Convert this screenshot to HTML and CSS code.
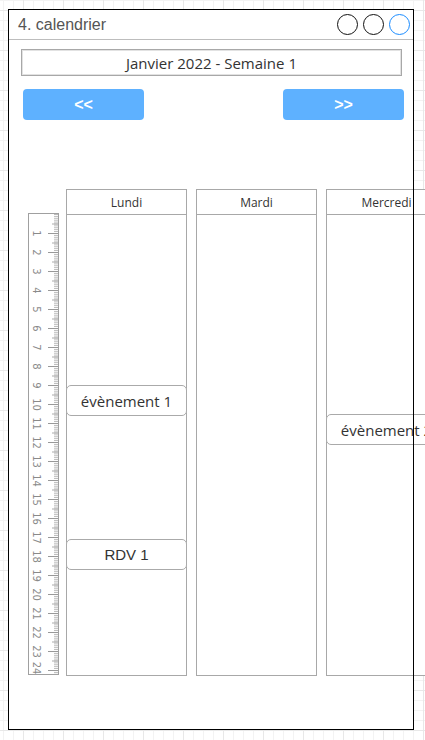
FILE: index.html
```html
<!DOCTYPE html>
<html lang="fr">
<head>
  <meta charset="UTF-8" />
  <meta name="viewport" content="width=device-width, initial-scale=1.0"/>
  <title>4. calendrier</title>
  <link rel="stylesheet" href="styles.css">
</head>
<body>

<div class="frame">
  <header class="titlebar">
    <span class="title">4. calendrier</span>
    <div class="dots">
      <span class="dot"></span>
      <span class="dot"></span>
      <span class="dot dot-blue"></span>
    </div>
  </header>

  <div class="week">Janvier 2022 - Semaine 1</div>

  <div class="nav">
    <button class="nav-btn">&lt;&lt;</button>
    <button class="nav-btn">&gt;&gt;</button>
  </div>

  <div class="calendar">
    <div class="ruler">
      <svg width="29" height="460" viewBox="0 0 29 460">
        <defs>
          <pattern id="minor" width="29" height="1.9" patternUnits="userSpaceOnUse">
            <rect x="25" y="0" width="4" height="0.9" fill="#b5b5b5"/>
          </pattern>
          <pattern id="half" width="29" height="19" patternUnits="userSpaceOnUse" y="9.5">
            <rect x="23" y="0" width="6" height="1" fill="#aaa"/>
          </pattern>
          <pattern id="major" width="29" height="19" patternUnits="userSpaceOnUse">
            <rect x="19" y="0" width="10" height="1" fill="#999"/>
          </pattern>
        </defs>
        <rect x="0" y="0" width="29" height="460" fill="url(#minor)"/>
        <rect x="0" y="0" width="29" height="460" fill="url(#half)"/>
        <rect x="0" y="1" width="29" height="460" fill="url(#major)"/>
        <g class="ruler-num">
          <text transform="translate(7 19.5) rotate(90)">1</text>
          <text transform="translate(7 38.5) rotate(90)">2</text>
          <text transform="translate(7 57.5) rotate(90)">3</text>
          <text transform="translate(7 76.5) rotate(90)">4</text>
          <text transform="translate(7 95.5) rotate(90)">5</text>
          <text transform="translate(7 114.5) rotate(90)">6</text>
          <text transform="translate(7 133.5) rotate(90)">7</text>
          <text transform="translate(7 152.5) rotate(90)">8</text>
          <text transform="translate(7 171.5) rotate(90)">9</text>
          <text transform="translate(7 190.5) rotate(90)">10</text>
          <text transform="translate(7 209.5) rotate(90)">11</text>
          <text transform="translate(7 228.5) rotate(90)">12</text>
          <text transform="translate(7 247.5) rotate(90)">13</text>
          <text transform="translate(7 266.5) rotate(90)">14</text>
          <text transform="translate(7 285.5) rotate(90)">15</text>
          <text transform="translate(7 304.5) rotate(90)">16</text>
          <text transform="translate(7 323.5) rotate(90)">17</text>
          <text transform="translate(7 342.5) rotate(90)">18</text>
          <text transform="translate(7 361.5) rotate(90)">19</text>
          <text transform="translate(7 380.5) rotate(90)">20</text>
          <text transform="translate(7 399.5) rotate(90)">21</text>
          <text transform="translate(7 418.5) rotate(90)">22</text>
          <text transform="translate(7 437.5) rotate(90)">23</text>
          <text transform="translate(7 454) rotate(90)">24</text>
        </g>
      </svg>
    </div>

    <div class="day">
      <div class="day-head">Lundi</div>
      <div class="day-body">
        <div class="event" style="top: 170px">évènement 1</div>
        <div class="event event-rdv" style="top: 324px">RDV 1</div>
      </div>
    </div>

    <div class="day">
      <div class="day-head">Mardi</div>
      <div class="day-body"></div>
    </div>

    <div class="day">
      <div class="day-head">Mercredi</div>
      <div class="day-body">
        <div class="event" style="top: 199px">évènement 2</div>
      </div>
    </div>
  </div>
</div>

</body>
</html>
```

FILE: styles.css
```css
* {
  box-sizing: border-box;
  margin: 0;
  padding: 0;
}

body {
  font-family: 'Open Sans', sans-serif;
  color: #333;
  overflow: hidden;
  background-color: #fff;
  background-image:
    linear-gradient(#e8e8e8 1px, transparent 1px),
    linear-gradient(90deg, #e8e8e8 1px, transparent 1px),
    linear-gradient(#f3f3f3 1px, transparent 1px),
    linear-gradient(90deg, #f3f3f3 1px, transparent 1px);
  background-size: 40px 40px, 40px 40px, 10px 10px, 10px 10px;
  background-position: 0 10px, 23px 0, 0 0, 3px 0;
}

.frame {
  position: relative;
  width: 406px;
  height: 721px;
  margin: 9px 0 0 8px;
  background: #fff;
}

/* border drawn on top of the columns that run past the edge */
.frame::after {
  content: "";
  position: absolute;
  inset: 0;
  border: 1.5px solid #000;
  pointer-events: none;
}

/* title bar */
.titlebar {
  height: 31px;
  border-bottom: 1px solid #bdbdbd;
  display: flex;
  align-items: center;
  justify-content: space-between;
  padding: 1px 4px 0 10px;
}

.title {
  font-family: 'Liberation Sans', Arial, sans-serif;
  font-size: 16px;
  color: #555;
}

.dots {
  display: flex;
  gap: 5px;
}

.dot {
  width: 21px;
  height: 21px;
  border: 1.3px solid #111;
  border-radius: 50%;
}

.dot-blue {
  border-color: #1a8cff;
}

/* week label */
.week {
  margin: 9px 0 0 13px;
  width: 381px;
  height: 27px;
  border: 1px solid #a8a8a8;
  box-shadow: inset 0 0 0 1px #e2e2e2;
  text-align: center;
  font-size: 15px;
  line-height: 26px;
  color: #333;
}

/* prev / next */
.nav {
  display: flex;
  justify-content: space-between;
  margin: 13px 0 0 15px;
  width: 381px;
}

.nav-btn {
  width: 121px;
  height: 31px;
  border: none;
  border-radius: 4px;
  background: #5eb1ff;
  color: #fff;
  font-family: 'Liberation Sans', Arial, sans-serif;
  font-weight: bold;
  font-size: 16px;
}

/* calendar */
.calendar {
  display: flex;
  align-items: flex-start;
  margin: 69px 0 0 20px;
}

.ruler {
  flex-shrink: 0;
  margin-top: 24px;
  width: 31px;
  height: 462px;
  border: 1px solid #a0a0a0;
  margin-right: 7px;
  background: #fff;
}

.ruler svg {
  display: block;
}

.ruler-num text {
  font-family: 'DejaVu Sans', sans-serif;
  font-size: 10px;
  fill: #8a8a8a;
  text-anchor: middle;
  dominant-baseline: central;
}

.day {
  flex-shrink: 0;
  width: 121px;
  margin-right: 9px;
  border: 1px solid #a8a8a8;
  background: #fff;
}

.day-head {
  height: 25px;
  border-bottom: 1px solid #a8a8a8;
  text-align: center;
  font-size: 12px;
  line-height: 26px;
  color: #333;
}

.day-body {
  position: relative;
  height: 460px;
}

.event {
  position: absolute;
  left: -1px;
  right: -1px;
  height: 31px;
  border: 1px solid #aaa;
  border-radius: 5px;
  background: #fff;
  text-align: center;
  font-size: 15px;
  line-height: 30px;
  color: #333;
  white-space: nowrap;
}

.event-rdv {
  font-family: 'Liberation Sans', Arial, sans-serif;
}
```
